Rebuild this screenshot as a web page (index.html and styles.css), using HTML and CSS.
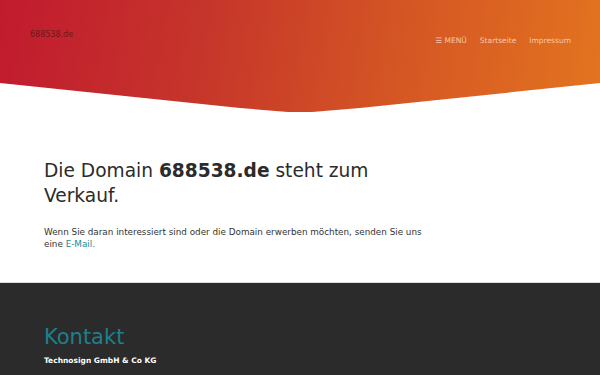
FILE: index.html
```html
<!DOCTYPE html>
<html lang="de">
<head>
	<meta charset="UTF-8">
	<title>688538.de steht zum Verkauf</title>
	<link rel="stylesheet" href="styles.css">
</head>
<body>
	<header class="top">
		<a href="#" class="logo">688538.de</a>
		<ul class="nav">
			<li><a href="#">&#9776; MENÜ</a></li>
			<li><a href="#">Startseite</a></li>
			<li><a href="#">Impressum</a></li>
		</ul>
	</header>
	<main class="content">
		<h1>Die Domain <b>688538.de</b> steht zum Verkauf.</h1>
		<p>Wenn Sie daran interessiert sind oder die Domain erwerben möchten, senden Sie uns eine <a href="#">E-Mail.</a></p>
	</main>
	<footer class="foot">
		<h2>Kontakt</h2>
		<p>Technosign GmbH &amp; Co KG</p>
	</footer>
</body>
</html>
```
FILE: styles.css
```css
*{padding:0; margin:0; list-style:none;}
body{font-family:"DejaVu Sans",sans-serif; color:#333; background:#fff;}
a{text-decoration:none;}

.top{height:112px; display:flex; justify-content:space-between; align-items:flex-start; padding:0 29px 0 30px;
	background:linear-gradient(100deg,#c11a2f 0%,#c6362a 35%,#d45524 65%,#e3741f 100%);
	clip-path:polygon(0 0,100% 0,100% 83px,60% 108px,52% 112px,48% 112px,40% 108px,0 83px);}
.logo{font-size:8px; color:#6a1b1b; margin-top:30px;}
.nav{display:flex; gap:13px; margin-top:36px;}
.nav li{font-size:7.5px; line-height:10px;}
.nav a{color:#f6c9ae;}

.content{width:386px; padding:46px 0 32px 44px;}
.content h1{font-size:18.6px; line-height:25px; font-weight:normal; color:#2b2b2b;}
.content h1 b{font-weight:bold;}
.content p{font-size:8.8px; line-height:12px; margin-top:18px; color:#333;}
.content p a{color:#1c8b96;}

.foot{background:#2b2b2b; border-top:1px solid #ddd; padding:41px 44px 20px; min-height:60px;}
.foot h2{font-size:21px; line-height:26px; font-weight:normal; color:#1e7f8b;}
.foot p{font-size:7.5px; line-height:12px; font-weight:bold; color:#fff; margin-top:5px;}
```
